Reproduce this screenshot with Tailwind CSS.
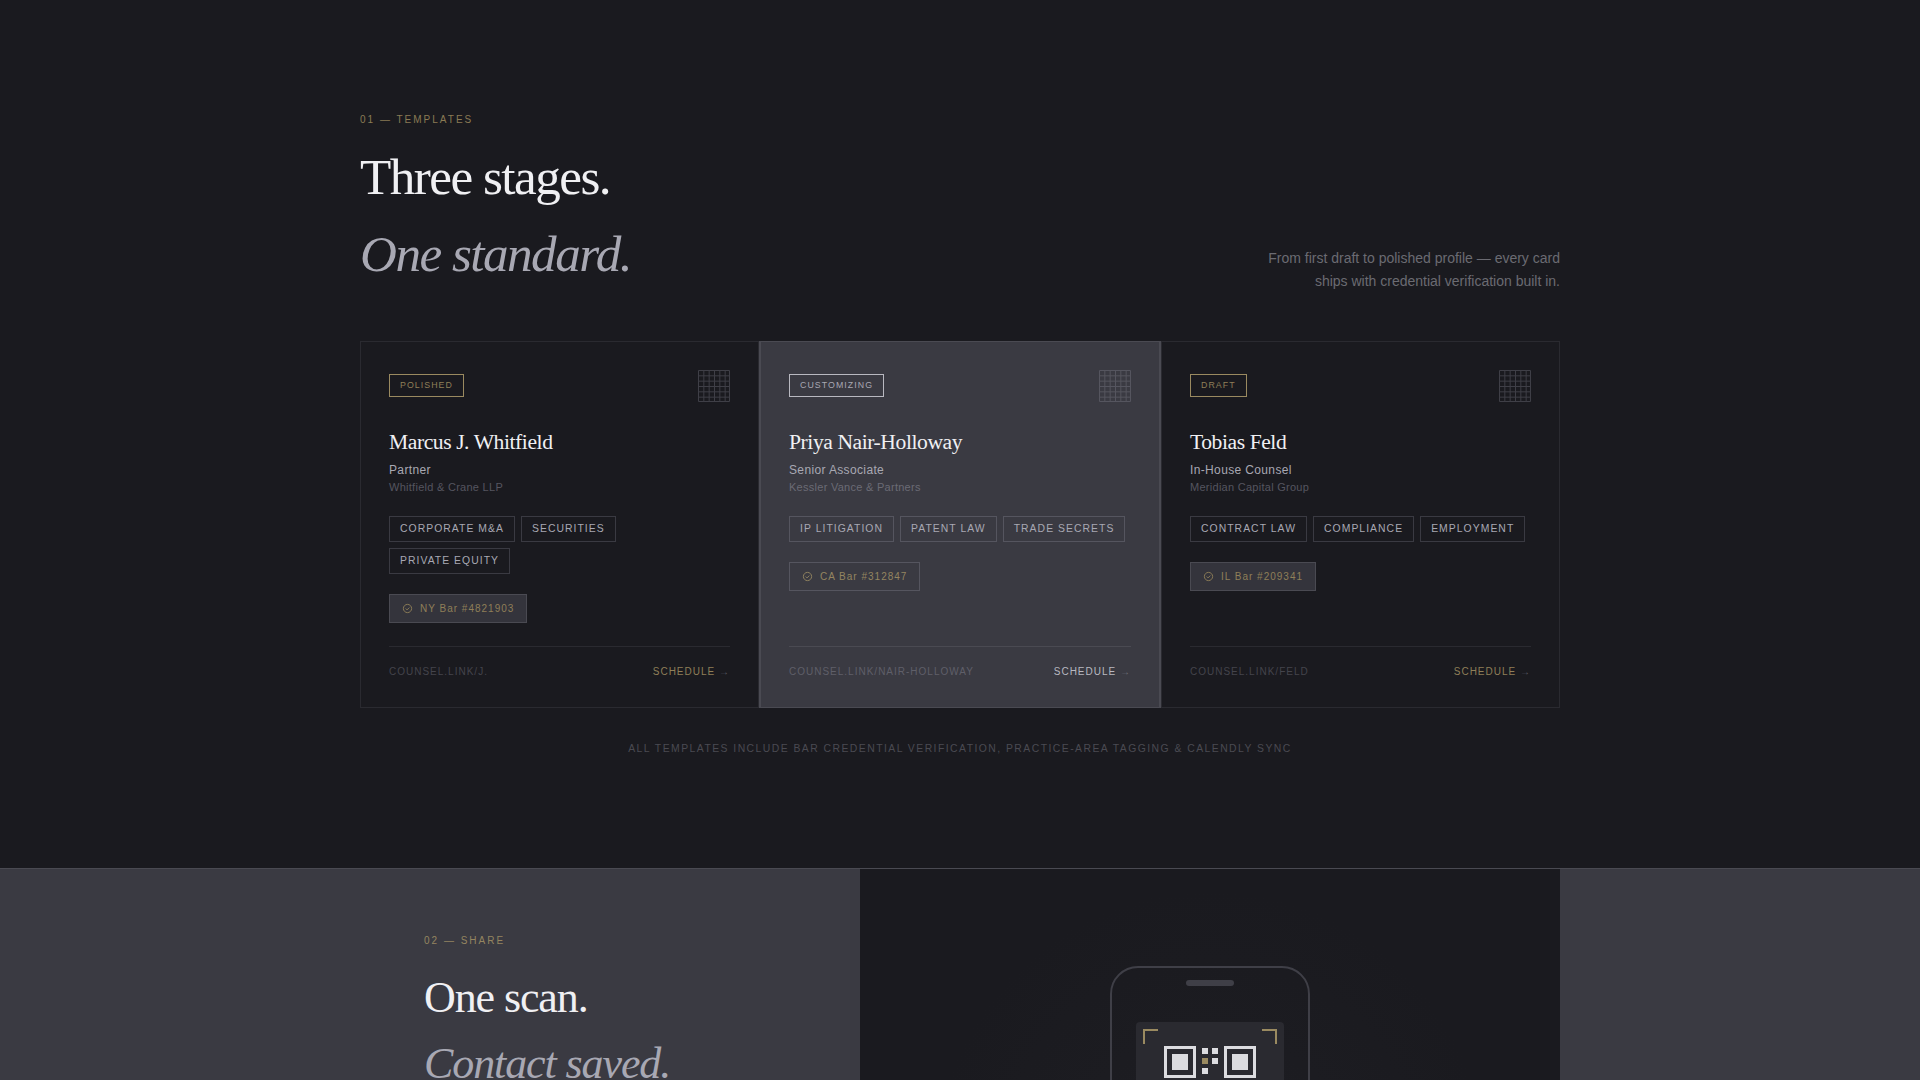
<!DOCTYPE html>
<html lang="en">
<head>
  <meta charset="UTF-8" />
  <meta name="viewport" content="width=device-width, initial-scale=1.0" />
  <title>Counsel Link</title>
  <script src="https://cdn.jsdelivr.net/npm/@tailwindcss/browser@4"></script>
</head>
<body class="bg-[#1a1a1f] text-white font-['Liberation_Sans',Arial,sans-serif] h-[1080px] overflow-hidden">

  <!-- Templates -->
  <section class="h-[868px] pt-[112px]">
    <div class="w-[1200px] mx-auto">
      <p class="text-[10px] leading-[15px] tracking-[0.2em] uppercase text-[#8a7b54]">01 — Templates</p>

      <div class="flex justify-between items-end mt-3 mb-12">
        <h2 class="font-['Liberation_Serif',serif] font-normal text-[51.2px] leading-[76.8px] tracking-[-0.03em] text-[#f0f0f3]">
          Three stages.<br />
          <em class="text-[#a8a8b3]">One standard.</em>
        </h2>
        <p class="text-right text-[14px] leading-[23px] text-[#6b6b72]">
          From first draft to polished profile — every card<br />
          ships with credential verification built in.
        </p>
      </div>

      <!-- Cards -->
      <div class="grid grid-cols-[399px_402px_399px] h-[367px]">

        <div class="flex flex-col border border-[#2a2a30] p-7">
          <div class="flex justify-between items-center">
            <span class="border border-[#9a8a60] px-[10px] h-[23px] leading-[21px] text-[8.8px] tracking-[0.12em] text-[#8f7f58]">POLISHED</span>
            <svg class="w-8 h-8" viewBox="0 0 32 32" fill="none" stroke="#3f3f47"><path d="M.5.5h31v31H.5zM5.830 0v32M11.170 0v32M16.500 0v32M21.830 0v32M27.170 0v32M0 5.830h32M0 11.170h32M0 16.500h32M0 21.830h32M0 27.170h32" /></svg>
          </div>
          <h3 class="mt-6 font-['Liberation_Serif',serif] text-[21.6px] leading-[32.4px] tracking-[-0.02em] text-[#f0f0f3]">Marcus J. Whitfield</h3>
          <p class="mt-[3px] text-[12px] leading-[18px] tracking-[0.03em] text-[#a8a8b3]">Partner</p>
          <p class="text-[11px] leading-[17px] tracking-[0.025em] text-[#55555f]">Whitfield &amp; Crane LLP</p>
          <div class="flex flex-wrap gap-[6px] mt-5">
            <span class="border border-[#3a3a42] px-[10px] h-[26px] leading-[24px] text-[10.4px] tracking-[0.1em] text-[#a8a8b3]">CORPORATE M&amp;A</span>
            <span class="border border-[#3a3a42] px-[10px] h-[26px] leading-[24px] text-[10.4px] tracking-[0.1em] text-[#a8a8b3]">SECURITIES</span>
            <span class="border border-[#3a3a42] px-[10px] h-[26px] leading-[24px] text-[10.4px] tracking-[0.1em] text-[#a8a8b3]">PRIVATE EQUITY</span>
          </div>
          <div class="self-start flex items-center gap-[7px] mt-5 h-[29px] px-3 border border-[#4a4a52] bg-[#34343c] text-[10px] tracking-[0.1em] text-[#8f7f58]">
            <svg class="w-[11px] h-[11px]" viewBox="0 0 12 12" fill="none" stroke="#8f7f58"><circle cx="6" cy="6" r="4.500" /><path d="M4 6l1.500 1.500L8 5" /></svg>
            NY Bar #4821903
          </div>
          <div class="mt-auto border-t border-[#2a2a30] pt-[17px] flex justify-between items-center text-[10px] leading-[15px] tracking-[0.1em]">
            <span class="text-[#44444c]">COUNSEL.LINK/J.</span>
            <span class="text-[#8f7f58]">SCHEDULE <span class="text-[#55555f]">→</span></span>
          </div>
        </div>

        <div class="flex flex-col border-y border-x-2 border-[#4a4a52] bg-[#3a3a42] p-7">
          <div class="flex justify-between items-center">
            <span class="border border-[#b8b8c0] px-[10px] h-[23px] leading-[21px] text-[8.8px] tracking-[0.12em] text-[#a8a8b3]">CUSTOMIZING</span>
            <svg class="w-8 h-8" viewBox="0 0 32 32" fill="none" stroke="#55555f"><path d="M.5.5h31v31H.5zM5.830 0v32M11.170 0v32M16.500 0v32M21.830 0v32M27.170 0v32M0 5.830h32M0 11.170h32M0 16.500h32M0 21.830h32M0 27.170h32" /></svg>
          </div>
          <h3 class="mt-6 font-['Liberation_Serif',serif] text-[21.6px] leading-[32.4px] tracking-[-0.02em] text-[#f0f0f3]">Priya Nair-Holloway</h3>
          <p class="mt-[3px] text-[12px] leading-[18px] tracking-[0.03em] text-[#a8a8b3]">Senior Associate</p>
          <p class="text-[11px] leading-[17px] tracking-[0.025em] text-[#6b6b75]">Kessler Vance &amp; Partners</p>
          <div class="flex flex-wrap gap-[6px] mt-5">
            <span class="border border-[#55555f] px-[10px] h-[26px] leading-[24px] text-[10.4px] tracking-[0.1em] text-[#a8a8b3]">IP LITIGATION</span>
            <span class="border border-[#55555f] px-[10px] h-[26px] leading-[24px] text-[10.4px] tracking-[0.1em] text-[#a8a8b3]">PATENT LAW</span>
            <span class="border border-[#55555f] px-[10px] h-[26px] leading-[24px] text-[10.4px] tracking-[0.1em] text-[#a8a8b3]">TRADE SECRETS</span>
          </div>
          <div class="self-start flex items-center gap-[7px] mt-5 h-[29px] px-3 border border-[#55555f] text-[10px] tracking-[0.1em] text-[#948560]">
            <svg class="w-[11px] h-[11px]" viewBox="0 0 12 12" fill="none" stroke="#948560"><circle cx="6" cy="6" r="4.500" /><path d="M4 6l1.500 1.500L8 5" /></svg>
            CA Bar #312847
          </div>
          <div class="mt-auto border-t border-[#4a4a52] pt-[17px] flex justify-between items-center text-[10px] leading-[15px] tracking-[0.1em]">
            <span class="text-[#5f5f69]">COUNSEL.LINK/NAIR-HOLLOWAY</span>
            <span class="text-[#b8b8c0]">SCHEDULE <span class="text-[#6b6b75]">→</span></span>
          </div>
        </div>

        <div class="flex flex-col border border-[#2a2a30] p-7">
          <div class="flex justify-between items-center">
            <span class="border border-[#9a8a60] px-[10px] h-[23px] leading-[21px] text-[8.8px] tracking-[0.12em] text-[#8f7f58]">DRAFT</span>
            <svg class="w-8 h-8" viewBox="0 0 32 32" fill="none" stroke="#3f3f47"><path d="M.5.5h31v31H.5zM5.830 0v32M11.170 0v32M16.500 0v32M21.830 0v32M27.170 0v32M0 5.830h32M0 11.170h32M0 16.500h32M0 21.830h32M0 27.170h32" /></svg>
          </div>
          <h3 class="mt-6 font-['Liberation_Serif',serif] text-[21.6px] leading-[32.4px] tracking-[-0.02em] text-[#f0f0f3]">Tobias Feld</h3>
          <p class="mt-[3px] text-[12px] leading-[18px] tracking-[0.03em] text-[#a8a8b3]">In-House Counsel</p>
          <p class="text-[11px] leading-[17px] tracking-[0.025em] text-[#55555f]">Meridian Capital Group</p>
          <div class="flex flex-wrap gap-[6px] mt-5">
            <span class="border border-[#3a3a42] px-[10px] h-[26px] leading-[24px] text-[10.4px] tracking-[0.1em] text-[#a8a8b3]">CONTRACT LAW</span>
            <span class="border border-[#3a3a42] px-[10px] h-[26px] leading-[24px] text-[10.4px] tracking-[0.1em] text-[#a8a8b3]">COMPLIANCE</span>
            <span class="border border-[#3a3a42] px-[10px] h-[26px] leading-[24px] text-[10.4px] tracking-[0.1em] text-[#a8a8b3]">EMPLOYMENT</span>
          </div>
          <div class="self-start flex items-center gap-[7px] mt-5 h-[29px] px-3 border border-[#4a4a52] bg-[#34343c] text-[10px] tracking-[0.1em] text-[#8f7f58]">
            <svg class="w-[11px] h-[11px]" viewBox="0 0 12 12" fill="none" stroke="#8f7f58"><circle cx="6" cy="6" r="4.500" /><path d="M4 6l1.500 1.500L8 5" /></svg>
            IL Bar #209341
          </div>
          <div class="mt-auto border-t border-[#2a2a30] pt-[17px] flex justify-between items-center text-[10px] leading-[15px] tracking-[0.1em]">
            <span class="text-[#44444c]">COUNSEL.LINK/FELD</span>
            <span class="text-[#8f7f58]">SCHEDULE <span class="text-[#55555f]">→</span></span>
          </div>
        </div>
      </div>

      <p class="mt-[33px] text-center text-[10.4px] leading-[15px] tracking-[0.14em] text-[#4a4a52]">ALL TEMPLATES INCLUDE BAR CREDENTIAL VERIFICATION, PRACTICE-AREA TAGGING &amp; CALENDLY SYNC</p>
    </div>
  </section>

  <!-- Share -->
  <section class="bg-[#3a3a42] border-t border-[#4a4a52] h-[212px] overflow-hidden">
    <div class="w-[1200px] mx-auto grid grid-cols-[500px_700px] h-full">
      <div class="pl-16 pt-[64px]">
        <p class="text-[10px] leading-[15px] tracking-[0.2em] text-[#948560]">02 — SHARE</p>
        <h2 class="mt-[17px] font-['Liberation_Serif',serif] font-normal text-[44px] leading-[66px] tracking-[-0.025em] text-[#f0f0f3]">
          One scan.<br />
          <em class="text-[#a8a8b3]">Contact saved.</em>
        </h2>
      </div>
      <div class="bg-[radial-gradient(circle_at_50%_60%,#1e1e23,#1a1a1f_60%)] pt-[97px]">
        <div class="relative w-[200px] h-[400px] mx-auto border-2 border-[#3f3f47] rounded-[28px]">
          <div class="w-12 h-[6px] mx-auto mt-3 rounded-full bg-[#3f3f47]"></div>
          <div class="relative w-[148px] h-[200px] mx-auto mt-9 rounded-[4px] bg-[#2a2a30] pt-6">
            <span class="absolute top-[7px] left-[7px] w-[15px] h-[15px] border-t-2 border-l-2 border-[#9a8a60]"></span>
            <span class="absolute top-[7px] right-[7px] w-[15px] h-[15px] border-t-2 border-r-2 border-[#9a8a60]"></span>
            <svg class="block mx-auto w-[92px] h-[92px]" viewBox="0 0 92 92">
              <path fill="none" stroke="#dcdce0" stroke-width="3" d="M1.500 1.500h29v29h-29zM61.500 1.500h29v29h-29z" />
              <path fill="#dcdce0" d="M8 8h16v16H8zM68 8h16v16H68zM38 2h6v6h-6zM48 2h6v6h-6zM48 12h6v6h-6zM38 22h6v6h-6z" />
              <path fill="#9a8a60" d="M38 12h6v6h-6z" />
            </svg>
          </div>
        </div>
      </div>
    </div>
  </section>

</body>
</html>
